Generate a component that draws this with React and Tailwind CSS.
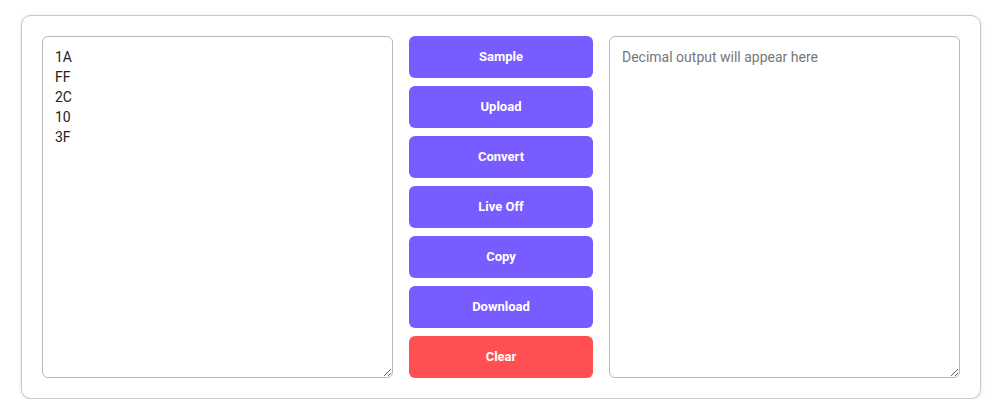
import React, { useState } from 'react';

function App() {
    const [input, setInput] = useState('1A\nFF\n2C\n10\n3F');
    const [output, setOutput] = useState('');

    const buttons = ['Sample', 'Upload', 'Convert', 'Live Off', 'Copy', 'Download'];

    return (
        <div className="bg-white pt-[15px] pl-[21px]" style={{ fontFamily: 'Roboto, "Liberation Sans", sans-serif' }}>
            <div className="w-[960px] h-[384px] border border-[#c8c8c8] rounded-[10px] shadow-[0_1px_4px_rgba(0,0,0,0.12)] p-5 bg-white">
                <div className="flex gap-4 h-full">
                    {/* Hex input */}
                    <textarea
                        value={input}
                        onChange={(e) => setInput(e.target.value)}
                        className="flex-1 h-full border border-[#b9b9b9] rounded-[6px] px-3 py-[10px] text-sm leading-5 text-[#222] outline-none resize-y"
                    />

                    {/* Actions */}
                    <div className="w-[184px] flex flex-col gap-2">
                        {buttons.map((label) => (
                            <button
                                key={label}
                                className="h-[42px] rounded-[6px] bg-[#795cff] text-white text-[13px] font-bold"
                            >
                                {label}
                            </button>
                        ))}
                        <button className="h-[42px] rounded-[6px] bg-[#ff4f52] text-white text-[13px] font-bold">
                            Clear
                        </button>
                    </div>

                    {/* Decimal output */}
                    <textarea
                        value={output}
                        onChange={(e) => setOutput(e.target.value)}
                        placeholder="Decimal output will appear here"
                        className="flex-1 h-full border border-[#b9b9b9] rounded-[6px] px-3 py-[10px] text-sm leading-5 text-[#222] placeholder:text-[#777] outline-none resize-y"
                    />
                </div>
            </div>
        </div>
    );
}

export default App;
